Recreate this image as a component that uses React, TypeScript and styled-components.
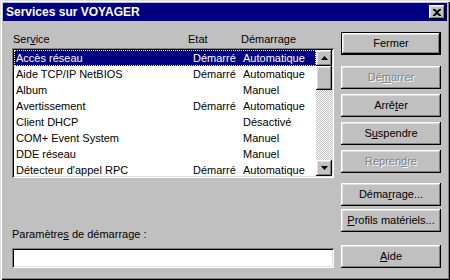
import React from "react";
import styled, { createGlobalStyle, css } from "styled-components";

const Global = createGlobalStyle`
  html, body { margin: 0; padding: 0; background: #c0c0c0; }
  body { font-family: "Liberation Sans", Arial, sans-serif; font-size: 11px; color: #000; }
`;

const bevelOut = css`
  box-shadow: inset -1px -1px #000, inset 1px 1px #fff, inset -2px -2px #808080, inset 2px 2px #dfdfdf;
`;
const bevelIn = css`
  box-shadow: inset 1px 1px #808080, inset -1px -1px #fff, inset 2px 2px #000, inset -2px -2px #dfdfdf;
`;

const Window = styled.div`
  width: 450px;
  height: 280px;
  box-sizing: border-box;
  padding: 3px;
  background: #c0c0c0;
  box-shadow: inset 1px 1px #dfdfdf, inset 2px 2px #fff, inset -1px -1px #000, inset -2px -2px #808080;
  display: flex;
  flex-direction: column;
`;

const TitleBar = styled.div`
  height: 18px;
  background: #000080;
  display: flex;
  align-items: center;
  justify-content: space-between;
  padding: 0 2px 0 3px;
`;

const TitleText = styled.span`
  color: #fff;
  font-weight: bold;
  font-size: 12px;
  line-height: 18px;
`;

const CloseButton = styled.div`
  width: 16px;
  height: 14px;
  box-sizing: border-box;
  background: #c0c0c0;
  ${bevelOut};
  display: flex;
  align-items: center;
  justify-content: center;
`;

const Body = styled.div`
  flex: 1;
  display: flex;
`;

const LeftCol = styled.div`
  width: 322px;
  margin-left: 9px;
  padding-top: 12px;
  display: flex;
  flex-direction: column;
`;

const RightCol = styled.div`
  width: 100px;
  margin-left: 7px;
  padding-top: 11px;
  display: flex;
  flex-direction: column;
`;

const HeaderRow = styled.div`
  display: grid;
  grid-template-columns: 175px 53px 1fr;
  padding-left: 1px;
  line-height: 13px;
  height: 13px;
`;

const ListBox = styled.div`
  margin-top: 2px;
  height: 130px;
  box-sizing: border-box;
  padding: 2px;
  background: #fff;
  ${bevelIn};
  display: flex;
  overflow: hidden;
`;

const Rows = styled.div`
  flex: 1;
  overflow: hidden;
`;

const Row = styled.div<{ $selected?: boolean }>`
  display: grid;
  grid-template-columns: 177px 50px 1fr;
  height: 16px;
  line-height: 16px;
  white-space: nowrap;
  ${(p) =>
    p.$selected &&
    css`
      background: #000080;
      color: #fff;
      outline: 1px dotted #ffff80;
      outline-offset: -1px;
    `}
`;

const Cell = styled.span`
  padding-left: 2px;
  overflow: hidden;
`;

const ScrollBar = styled.div`
  width: 16px;
  display: flex;
  flex-direction: column;
`;

const ScrollButton = styled.div`
  width: 16px;
  height: 16px;
  box-sizing: border-box;
  background: #c0c0c0;
  ${bevelOut};
  display: flex;
  align-items: center;
  justify-content: center;
`;

const Thumb = styled.div`
  width: 16px;
  height: 24px;
  box-sizing: border-box;
  background: #c0c0c0;
  ${bevelOut};
`;

const Track = styled.div`
  flex: 1;
  background-image: conic-gradient(#fff 25%, #c0c0c0 0 50%, #fff 0 75%, #c0c0c0 0);
  background-size: 2px 2px;
`;

const FieldLabel = styled.div`
  margin-top: 50px;
  line-height: 13px;
`;

const TextInput = styled.div`
  margin-top: 7px;
  height: 20px;
  box-sizing: border-box;
  background: #fff;
  ${bevelIn};
`;

const Button = styled.div<{ $gap: number; $disabled?: boolean; $default?: boolean }>`
  margin-top: ${(p) => p.$gap}px;
  height: 23px;
  box-sizing: border-box;
  background: #c0c0c0;
  display: flex;
  align-items: center;
  justify-content: center;
  line-height: 13px;
  ${(p) =>
    p.$default
      ? css`
          border: 1px solid #000;
          box-shadow: inset -1px -1px #000, inset 1px 1px #fff, inset -2px -2px #808080, inset 2px 2px #dfdfdf;
        `
      : bevelOut};
  ${(p) =>
    p.$disabled &&
    css`
      color: #808080;
      text-shadow: 1px 1px 0 #fff;
    `}
`;

const Key = styled.span`
  text-decoration: underline;
`;

function Mnemonic({ text, idx }: { text: string; idx: number }) {
  if (idx < 0) return <>{text}</>;
  return (
    <>
      {text.slice(0, idx)}
      <Key>{text[idx]}</Key>
      {text.slice(idx + 1)}
    </>
  );
}

const services: [string, string, string][] = [
  ["Accès réseau", "Démarré", "Automatique"],
  ["Aide TCP/IP NetBIOS", "Démarré", "Automatique"],
  ["Album", "", "Manuel"],
  ["Avertissement", "Démarré", "Automatique"],
  ["Client DHCP", "", "Désactivé"],
  ["COM+ Event System", "", "Manuel"],
  ["DDE réseau", "", "Manuel"],
  ["Détecteur d'appel RPC", "Démarré", "Automatique"],
];

const buttons: { label: string; key: number; gap: number; disabled?: boolean; def?: boolean }[] = [
  { label: "Fermer", key: -1, gap: 0, def: true },
  { label: "Démarrer", key: 2, gap: 11, disabled: true },
  { label: "Arrêter", key: 4, gap: 5 },
  { label: "Suspendre", key: 1, gap: 5 },
  { label: "Reprendre", key: 6, gap: 5, disabled: true },
  { label: "Démarrage...", key: 4, gap: 10 },
  { label: "Profils matériels...", key: 0, gap: 3 },
  { label: "Aide", key: 0, gap: 13 },
];

export default function App() {
  return (
    <>
      <Global />
      <Window>
        <TitleBar>
          <TitleText>Services sur VOYAGER</TitleText>
          <CloseButton>
            <svg width="8" height="7" viewBox="0 0 8 7">
              <path d="M0 0h2l2 2 2-2h2v1L5 3.5 8 6v1H6L4 5 2 7H0V6l3-2.5L0 1z" fill="#000" />
            </svg>
          </CloseButton>
        </TitleBar>
        <Body>
          <LeftCol>
            <HeaderRow>
              <span>
                <Mnemonic text="Service" idx={3} />
              </span>
              <span>Etat</span>
              <span>Démarrage</span>
            </HeaderRow>
            <ListBox>
              <Rows>
                {services.map((s, i) => (
                  <Row key={s[0]} $selected={i === 0}>
                    <Cell>{s[0]}</Cell>
                    <Cell>{s[1]}</Cell>
                    <Cell>{s[2]}</Cell>
                  </Row>
                ))}
              </Rows>
              <ScrollBar>
                <ScrollButton>
                  <svg width="7" height="4" viewBox="0 0 7 4">
                    <path d="M3.5 0L7 4H0z" fill="#000" />
                  </svg>
                </ScrollButton>
                <Thumb />
                <Track />
                <ScrollButton>
                  <svg width="7" height="4" viewBox="0 0 7 4">
                    <path d="M0 0h7L3.5 4z" fill="#000" />
                  </svg>
                </ScrollButton>
              </ScrollBar>
            </ListBox>
            <FieldLabel>
              <Mnemonic text="Paramètres de démarrage :" idx={9} />
            </FieldLabel>
            <TextInput />
          </LeftCol>
          <RightCol>
            {buttons.map((b) => (
              <Button key={b.label} $gap={b.gap} $disabled={b.disabled} $default={b.def}>
                <span>
                  <Mnemonic text={b.label} idx={b.key} />
                </span>
              </Button>
            ))}
          </RightCol>
        </Body>
      </Window>
    </>
  );
}
